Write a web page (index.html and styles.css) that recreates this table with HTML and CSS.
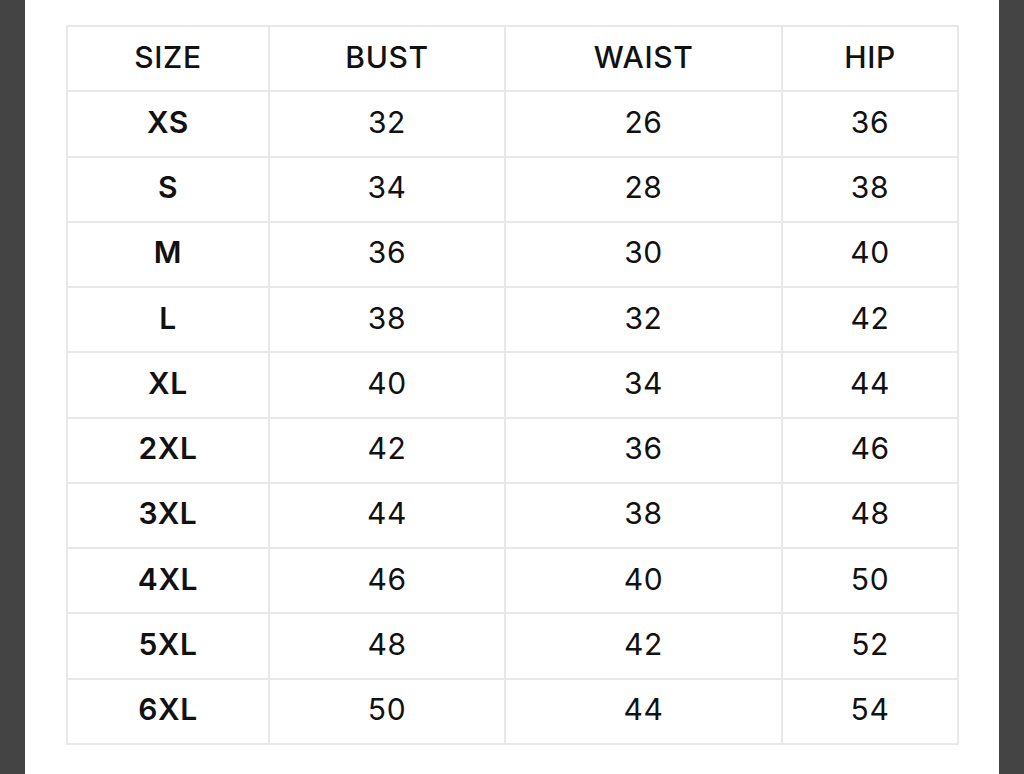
FILE: index.html
```html
<!DOCTYPE html>
<html>
<head>
<meta charset="utf-8">
<link rel="stylesheet" href="styles.css">
</head>
<body>
<div class="panel">
<table class="chart">
<colgroup><col class="c1"><col class="c2"><col class="c3"><col class="c4"></colgroup>
<thead>
<tr><th>SIZE</th><th>BUST</th><th>WAIST</th><th>HIP</th></tr>
</thead>
<tbody>
<tr><td class="sz">XS</td><td>32</td><td>26</td><td>36</td></tr>
<tr><td class="sz">S</td><td>34</td><td>28</td><td>38</td></tr>
<tr><td class="sz">M</td><td>36</td><td>30</td><td>40</td></tr>
<tr><td class="sz">L</td><td>38</td><td>32</td><td>42</td></tr>
<tr><td class="sz">XL</td><td>40</td><td>34</td><td>44</td></tr>
<tr><td class="sz">2XL</td><td>42</td><td>36</td><td>46</td></tr>
<tr><td class="sz">3XL</td><td>44</td><td>38</td><td>48</td></tr>
<tr><td class="sz">4XL</td><td>46</td><td>40</td><td>50</td></tr>
<tr><td class="sz">5XL</td><td>48</td><td>42</td><td>52</td></tr>
<tr><td class="sz">6XL</td><td>50</td><td>44</td><td>54</td></tr>
</tbody>
</table>
</div>
</body>
</html>
```
FILE: styles.css
```css
html, body {
  margin: 0;
  padding: 0;
  background: #444444;
  height: 100%;
}
.panel {
  margin: 0 25px;
  background: #ffffff;
  height: 774px;
  padding: 25px 41px;
  box-sizing: border-box;
}
.chart {
  width: 891px;
  border-collapse: collapse;
  table-layout: fixed;
  font-family: Inter, "Liberation Sans", sans-serif;
  color: #111111;
}
.c1 { width: 202px; }
.c2 { width: 236px; }
.c3 { width: 277px; }
.c4 { width: 176px; }
.chart th, .chart td {
  border: 2px solid #e8e8e8;
  height: 65.25px;
  padding: 0 0 4px 0;
  text-align: center;
  vertical-align: middle;
  font-size: 30px;
  letter-spacing: 0.6px;
  box-sizing: border-box;
}
.chart th {
  font-weight: 500;
}
.chart td {
  font-weight: 400;
}
.chart td.sz {
  font-weight: 600;
}
```
